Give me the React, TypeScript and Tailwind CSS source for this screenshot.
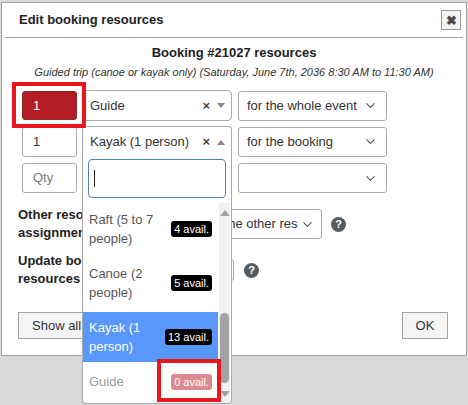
import { ChevronDown } from 'lucide-react';

type Option = {
  label: string[];
  avail: number;
  state?: 'active' | 'disabled';
};

const options: Option[] = [
  { label: ['Raft (5 to 7', 'people)'], avail: 4 },
  { label: ['Canoe (2', 'people)'], avail: 5 },
  { label: ['Kayak (1', 'person)'], avail: 13, state: 'active' },
  { label: ['Guide'], avail: 0, state: 'disabled' },
];

const font = { fontFamily: '"Liberation Sans", Arial, sans-serif' };

function QtyInput({ value, placeholder, alert }: { value?: string; placeholder?: string; alert?: boolean }) {
  if (alert) {
    return (
      <div className="relative">
        <div className="flex h-[29px] w-[55px] items-center rounded-[3px] border border-[#8f2a2e] bg-[#b31c23] pl-[10px] text-[13px] text-white">
          {value}
        </div>
        {/* warning frame drawn over the field */}
        <span className="absolute -left-[10px] -top-[9px] h-[46px] w-[74px] border-4 border-[#e8161d]" />
      </div>
    );
  }
  return (
    <div className="flex h-[30px] w-[55px] items-center rounded-[3px] border border-[#aaa] bg-white pl-[10px] text-[13px] text-[#333]">
      {value ?? <span className="text-[#777]">{placeholder}</span>}
    </div>
  );
}

function Select2({ value, open }: { value: string; open?: boolean }) {
  return (
    <div
      className={
        'flex h-[31px] w-[150px] items-center border border-[#aaa] bg-white pl-[7px] text-[13px] text-[#333] ' +
        (open ? 'rounded-t-[4px] border-b-0' : 'rounded-[4px]')
      }
    >
      <span className="flex-1">{value}</span>
      <span className="mr-[7px] text-[13px] font-bold text-[#444]">×</span>
      <span
        className={
          'mr-[6px] h-0 w-0 border-x-[4px] border-x-transparent ' +
          (open ? 'border-b-[5px] border-b-[#888]' : 'border-t-[5px] border-t-[#888]')
        }
      />
    </div>
  );
}

function PlainSelect({ value }: { value: string }) {
  return (
    <div className="flex h-[30px] w-[149px] items-center rounded-[3px] border border-[#aaa] bg-white pl-[8px] pr-[8px] text-[13px] text-[#333]">
      <span className="flex-1 truncate">{value}</span>
      <ChevronDown size={15} strokeWidth={1.75} className="text-[#555]" />
    </div>
  );
}

function Help() {
  return (
    <span className="flex h-[15px] w-[15px] items-center justify-center rounded-full bg-[#555b60] text-[11px] font-bold leading-none text-white">
      ?
    </span>
  );
}

export default function App() {
  return (
    <div className="relative h-[405px] w-[468px] overflow-hidden bg-[#d9d9d9]" style={font}>
      <div className="ml-[1px] mt-[2px] h-[354px] w-[466px] border border-[#a3a3a3] bg-white">
        {/* header */}
        <div className="mx-[3px] flex h-[35px] items-center justify-between border-b border-[#a3a3a3] pl-[14px] pr-[2px]">
          <h1 className="text-[13px] font-bold text-[#222]">Edit booking resources</h1>
          <button className="flex h-[20px] w-[20px] items-center justify-center border border-[#999] bg-[#f3f3f3] text-[13px] font-bold leading-none text-[#4a4a4a]">
            ✖
          </button>
        </div>

        {/* body */}
        <div className="pt-[6px] text-center">
          <div className="text-[13px] font-bold leading-[18px] text-[#222]">Booking #21027 resources</div>
          <div className="mt-[3px] text-[11px] italic leading-[14px] text-[#333]">
            Guided trip (canoe or kayak only) (Saturday, June 7th, 2036 8:30 AM to 11:30 AM)
          </div>
        </div>

        <div className="mt-[11px] flex flex-col gap-[5px] pl-[20px]">
          <div className="flex items-center gap-[5px]">
            <QtyInput value="1" alert />
            <Select2 value="Guide" />
            <div className="ml-[1px]">
              <PlainSelect value="for the whole event" />
            </div>
          </div>
          <div className="flex items-center gap-[5px]">
            <QtyInput value="1" />
            <Select2 value="Kayak (1 person)" open />
            <div className="ml-[1px]">
              <PlainSelect value="for the booking" />
            </div>
          </div>
          <div className="flex items-center gap-[5px] pt-[1px]">
            <QtyInput placeholder="Qty" />
            <div className="h-[30px] w-[150px]" />
            <div className="ml-[1px]">
              <PlainSelect value="" />
            </div>
          </div>
        </div>

        {/* options */}
        <div className="mt-[13px] flex flex-col gap-[10px] pl-[16px] text-[13px] font-bold leading-[18px] text-[#222]">
          <div className="flex items-center">
            <div className="w-[120px] shrink-0">
              Other resources
              <br />
              assignment
            </div>
            <div className="ml-[27px] flex h-[30px] w-[157px] shrink-0 items-center rounded-[3px] border border-[#aaa] pl-[8px] pr-[6px] font-normal text-[#333]">
              <span className="flex-1 overflow-hidden whitespace-nowrap">Apply to the other resources</span>
              <ChevronDown size={15} strokeWidth={1.75} className="ml-[2px] shrink-0 text-[#555]" />
            </div>
            <div className="ml-[9px]">
              <Help />
            </div>
          </div>
          <div className="flex items-center">
            <div className="w-[120px] shrink-0">
              Update booking
              <br />
              resources
            </div>
            <div className="ml-[20px] h-[22px] w-[76px] rounded-[3px] border border-[#aaa]" />
            <div className="ml-[10px]">
              <Help />
            </div>
          </div>
        </div>

        {/* footer */}
        <div className="mt-[24px] flex items-center justify-between pl-[16px] pr-[18px]">
          <button className="h-[27px] w-[130px] whitespace-nowrap border border-[#a3a3a3] bg-[#f4f4f4] pl-[13px] text-left text-[13px] text-[#333]">
            Show all resources
          </button>
          <button className="h-[27px] w-[46px] border border-[#a3a3a3] bg-[#f4f4f4] text-[13px] text-[#333]">OK</button>
        </div>
      </div>

      {/* open select2 results */}
      <div className="absolute left-[82px] top-[156px] h-[248px] w-[150px] overflow-hidden rounded-b-[4px] border border-t-0 border-[#aaa] bg-white">
        <div className="mx-[5px] mt-[3px] flex h-[39px] items-center rounded-[4px] border border-[#4f83bd] pl-[5px]">
          <span className="h-[17px] w-px bg-[#222]" />
        </div>
        <div className="relative mt-[6px] flex pr-[13px]">
          <div className="flex flex-1 flex-col gap-[4px] text-[13px] leading-[19px]">
            {options.map((o) => (
              <div
                key={o.label[0]}
                className={
                  'flex items-center py-[6px] pl-[6px] pr-[6px] ' +
                  (o.state === 'active'
                    ? 'bg-[#5897fb] text-white'
                    : o.state === 'disabled'
                      ? 'text-[#999]'
                      : 'text-[#555]')
                }
              >
                <div className="flex-1">
                  {o.label.map((l) => (
                    <div key={l}>{l}</div>
                  ))}
                </div>
                <span
                  className={
                    'rounded-[3px] px-[3px] text-[11px] leading-[16px] text-white ' +
                    (o.avail === 0 ? 'bg-[#dc8a90]' : 'bg-black')
                  }
                >
                  {o.avail} avail.
                </span>
              </div>
            ))}
          </div>
          {/* scrollbar */}
          <div className="absolute -top-[1px] right-[1px] flex h-[200px] w-[11px] flex-col items-center bg-[#f1f1f1]">
            <span className="mt-[7px] h-0 w-0 border-x-[5px] border-b-[6px] border-x-transparent border-b-[#a3a3a3]" />
            <span className="mt-[97px] h-[70px] w-[9px] rounded-full bg-[#a3a3a3]" />
            <span className="mt-[8px] h-0 w-0 border-x-[5px] border-t-[6px] border-x-transparent border-t-[#a3a3a3]" />
          </div>
        </div>
      </div>

      {/* highlight around the empty resource badge */}
      <div className="absolute left-[157px] top-[359px] h-[43px] w-[64px] border-4 border-[#e8161d]" />
    </div>
  );
}
